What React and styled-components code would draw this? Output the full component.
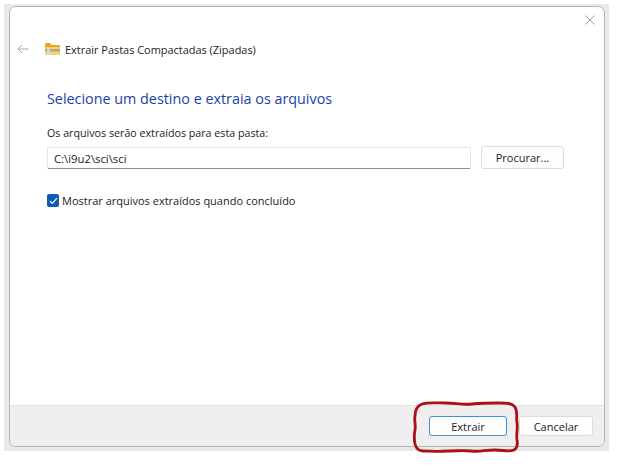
import React from "react";
import styled, { createGlobalStyle } from "styled-components";

const Global = createGlobalStyle`
  html, body {
    margin: 0;
    height: 100%;
    background: #fff;
  }
  body {
    font-family: "Open Sans", "Noto Sans", sans-serif;
    overflow: hidden;
  }
`;

const Page = styled.div`
  position: relative;
  width: 619px;
  height: 468px;
  padding: 4px 0 0 4px;
  box-sizing: border-box;
`;

const Backdrop = styled.div`
  width: 605px;
  height: 447px;
  padding: 2px 4px 4px 5px;
  box-sizing: border-box;
  background: #e9e9e9;
`;

const Dialog = styled.div`
  height: 100%;
  display: flex;
  flex-direction: column;
  background: #fff;
  border: 1px solid #b4b4b4;
  border-radius: 7px;
  overflow: hidden;
  box-sizing: border-box;
`;

const CloseRow = styled.div`
  display: flex;
  justify-content: flex-end;
  padding: 8px 9px 0 0;
  height: 12px;
`;

const Header = styled.div`
  display: flex;
  align-items: center;
  margin-top: 11px;
  padding-left: 7px;
  height: 22px;
`;

const HeaderTitle = styled.span`
  margin-left: 5px;
  font-size: 10.95px;
  color: #1c1c1c;
`;

const Body = styled.div`
  flex: 1;
  padding: 29px 40px 0 37px;
`;

const Heading = styled.h1`
  margin: 0;
  font-size: 14.35px;
  line-height: 20px;
  font-weight: 400;
  color: #1a3fa8;
`;

const FieldLabel = styled.div`
  margin-top: 17px;
  font-size: 10.7px;
  line-height: 15px;
  color: #1c1c1c;
`;

const PathRow = styled.div`
  display: flex;
  align-items: center;
  gap: 10px;
  margin-top: 5px;
`;

const PathInput = styled.div`
  flex: 1;
  height: 22px;
  line-height: 21px;
  padding-left: 6px;
  box-sizing: border-box;
  border: 1px solid #e4e4e4;
  border-bottom: 1px solid #8c8c8c;
  border-radius: 2px;
  font-size: 11.3px;
  color: #1c1c1c;
`;

const Button = styled.div`
  width: ${(p) => p.$width}px;
  height: ${(p) => p.$height}px;
  display: flex;
  align-items: center;
  justify-content: center;
  box-sizing: border-box;
  background: #fdfdfd;
  border: 1px solid ${(p) => (p.$primary ? "#3f8fd6" : "#dcdcdc")};
  border-radius: 3px;
  font-size: 11px;
  color: #1c1c1c;
`;

const CheckRow = styled.div`
  display: flex;
  align-items: center;
  gap: 3px;
  margin-top: 24px;
`;

const CheckBox = styled.div`
  width: 12px;
  height: 13px;
  display: flex;
  align-items: center;
  justify-content: center;
  background: #0f5cb4;
  border-radius: 2px;
`;

const CheckLabel = styled.span`
  font-size: 11px;
  color: #1c1c1c;
`;

const Footer = styled.div`
  height: 40px;
  display: flex;
  align-items: center;
  justify-content: flex-end;
  gap: 12px;
  padding-right: 11px;
  background: #efefef;
  border-top: 1px solid #e3e3e3;
`;

const Scribble = styled.svg`
  position: absolute;
  left: 0;
  top: 0;
  pointer-events: none;
`;

const Back = () => (
  <svg width="12" height="10" viewBox="0 0 12 10" fill="none" stroke="#a8a8a8" strokeWidth="1">
    <path d="M11.5 5H1M5 1 1 5l4 4" />
  </svg>
);

const ZipFolder = () => (
  <svg width="15" height="14" viewBox="0 0 15 14" style={{ marginLeft: 16 }}>
    <path d="M0 2a1 1 0 0 1 1-1h4l2 2h7a1 1 0 0 1 1 1v2H0z" fill="#e9a91f" />
    <rect x="0" y="5" width="15" height="8" rx="1" fill="#fbd364" />
    <rect x="0" y="7" width="15" height="2.5" fill="#a9a793" />
    <rect x="2" y="6" width="3" height="7" fill="#d8d6c4" />
  </svg>
);

const Close = () => (
  <svg width="10" height="10" viewBox="0 0 10 10" stroke="#9a9a9a" strokeWidth="1">
    <path d="M.5.5l9 9M9.5.5l-9 9" />
  </svg>
);

export default function App() {
  return (
    <Page>
      <Global />
      <Backdrop>
        <Dialog>
          <CloseRow>
            <Close />
          </CloseRow>
          <Header>
            <Back />
            <ZipFolder />
            <HeaderTitle>Extrair Pastas Compactadas (Zipadas)</HeaderTitle>
          </Header>
          <Body>
            <Heading>Selecione um destino e extraia os arquivos</Heading>
            <FieldLabel>Os arquivos serão extraídos para esta pasta:</FieldLabel>
            <PathRow>
              <PathInput>C:\i9u2\sci\sci</PathInput>
              <Button $width={83} $height={23}>Procurar...</Button>
            </PathRow>
            <CheckRow>
              <CheckBox>
                <svg width="9" height="8" viewBox="0 0 9 8" fill="none" stroke="#fff" strokeWidth="1.2">
                  <path d="M1 4.2 3.3 6.5 8 1.2" />
                </svg>
              </CheckBox>
              <CheckLabel>Mostrar arquivos extraídos quando concluído</CheckLabel>
            </CheckRow>
          </Body>
          <Footer>
            <Button $primary $width={78} $height={20}>Extrair</Button>
            <Button $width={74} $height={20}>Cancelar</Button>
          </Footer>
        </Dialog>
      </Backdrop>
      <Scribble width="619" height="468" viewBox="0 0 619 468" fill="none">
        <path
          d="M422 404c6-2 14-1 24-1 10 0 16 2 26 1 10-1 18-1 27-1 8 0 13 0 16 4 3 5 1 10 2 16 1 6-1 11 0 17 1 5 0 8-3 10-5 2-11 0-19 0-10 0-15 2-24 1-9-1-14 0-24 0-9 1-16 0-24 0-4 0-7-3-8-7-1-5-1-9 0-14 1-5-1-9 0-14 0-6 2-10 7-12z"
          stroke="#a9101a"
          strokeWidth="2.8"
        />
      </Scribble>
    </Page>
  );
}
